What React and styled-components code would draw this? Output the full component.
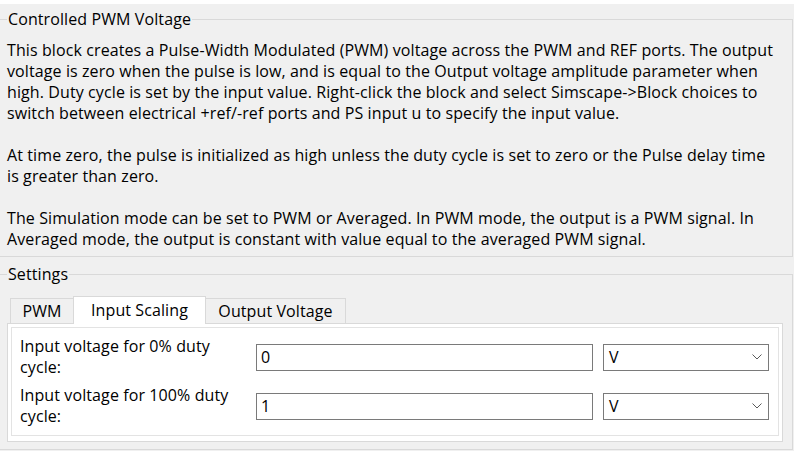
import React from 'react';
import styled, { createGlobalStyle } from 'styled-components';

const Global = createGlobalStyle`
  html, body { margin: 0; padding: 0; background: #f0f0f0; }
  body {
    font-family: "Open Sans", "Noto Sans", sans-serif;
    font-size: 16px;
    letter-spacing: 0.1px;
    line-height: 21px;
    color: #000;
  }
  * { box-sizing: border-box; }
`;

const Page = styled.div`
  width: 794px;
  height: 451px;
  overflow: hidden;
  background: #f0f0f0;
  display: flex;
  flex-direction: column;
`;

const TopStrip = styled.div`
  flex: none;
  height: 4px;
  background: #ffffff;
`;

const Group = styled.fieldset`
  flex: none;
  min-width: 0;
  margin: ${p => p.$mt}px 1px 0 0;
  border: 1px solid #d9d9d9;
  border-left: none;
  padding: ${p => p.$pt}px 0 ${p => p.$pb}px 7px;
`;

const Legend = styled.legend`
  padding: 0 1px;
  line-height: 21px;
`;

const Paragraph = styled.p`
  margin: 0 0 21px;
  white-space: nowrap;
  &:last-child { margin-bottom: 0; }
`;

const TabBar = styled.div`
  display: flex;
  align-items: flex-start;
  height: 28px;
  margin: 0 0 -1px 3px;
  position: relative;
  z-index: 1;
`;

const Tab = styled.div`
  width: ${p => p.$w}px;
  display: flex;
  align-items: center;
  justify-content: center;
  white-space: nowrap;
  border: 1px solid #d9d9d9;
  border-bottom: none;
  ${p => p.$active ? `
    height: 28px;
    background: #ffffff;
  ` : `
    height: 25px;
    margin-top: 2px;
    background: #f0f0f0;
    padding-top: 1px;
  `}
  ${p => p.$noLeft && 'border-left: none;'}
  ${p => p.$noRight && 'border-right: none;'}
`;

const Pane = styled.div`
  width: 776px;
  background: #ffffff;
  border: 1px solid #d9d9d9;
  padding: 3px 3px 5px;
`;

const Inner = styled.div`
  border: 1px solid #e3e3e3;
  padding: 8px 9px 8px 8px;
  display: grid;
  grid-template-columns: 226px 337px 166px;
  column-gap: 10px;
  row-gap: 7px;
  align-items: center;
`;

const Label = styled.div`
  white-space: nowrap;
  line-height: 21px;
`;

const TextBox = styled.div`
  height: 27px;
  border: 1px solid #7a7a7a;
  background: #fff;
  padding-left: 4px;
  display: flex;
  align-items: center;
`;

const Select = styled.div`
  height: 27px;
  border: 1px solid #7a7a7a;
  background: #fff;
  padding: 0 6px 0 5px;
  display: flex;
  align-items: center;
  justify-content: space-between;
`;

const Chevron = () => (
  <svg width="10" height="6" viewBox="0 0 10 6">
    <path d="M0.5 0.5 L5 5 L9.5 0.5" fill="none" stroke="#5a5a5a" strokeWidth="1" />
  </svg>
);

const Row = ({ label1, label2, value }) => (
  <>
    <Label>{label1}<br />{label2}</Label>
    <TextBox>{value}</TextBox>
    <Select><span>V</span><Chevron /></Select>
  </>
);

export default function App() {
  return (
    <>
      <Global />
      <Page>
        <TopStrip />
        <Group $mt={5} $pt={10} $pb={6}>
          <Legend>Controlled PWM Voltage</Legend>
          <Paragraph>
            This block creates a Pulse-Width Modulated (PWM) voltage across the PWM and REF ports. The output<br />
            voltage is zero when the pulse is low, and is equal to the Output voltage amplitude parameter when<br />
            high. Duty cycle is set by the input value. Right-click the block and select Simscape-&gt;Block choices to<br />
            switch between electrical +ref/-ref ports and PS input u to specify the input value.
          </Paragraph>
          <Paragraph>
            At time zero, the pulse is initialized as high unless the duty cycle is set to zero or the Pulse delay time<br />
            is greater than zero.
          </Paragraph>
          <Paragraph>
            The Simulation mode can be set to PWM or Averaged. In PWM mode, the output is a PWM signal. In<br />
            Averaged mode, the output is constant with value equal to the averaged PWM signal.
          </Paragraph>
        </Group>
        <Group $mt={7} $pt={11} $pb={7}>
          <Legend>Settings</Legend>
          <TabBar>
            <Tab $w={63} $noRight>PWM</Tab>
            <Tab $w={133} $active>Input Scaling</Tab>
            <Tab $w={140} $noLeft>Output Voltage</Tab>
          </TabBar>
          <Pane>
            <Inner>
              <Row label1="Input voltage for 0% duty" label2="cycle:" value="0" />
              <Row label1="Input voltage for 100% duty" label2="cycle:" value="1" />
            </Inner>
          </Pane>
        </Group>
      </Page>
    </>
  );
}
